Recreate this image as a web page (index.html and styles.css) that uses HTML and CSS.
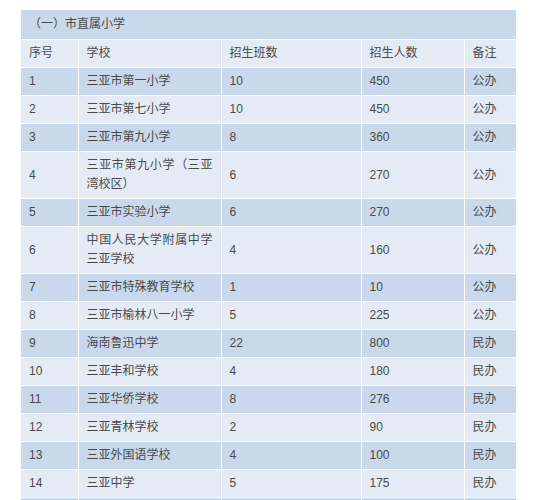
FILE: index.html
```html
<!DOCTYPE html>
<html lang="zh">
<head>
<meta charset="utf-8">
<link rel="stylesheet" href="styles.css">
</head>
<body>
<table class="tbl">
  <colgroup>
    <col class="c1"><col class="c2"><col class="c3"><col class="c4"><col class="c5">
  </colgroup>
  <tr class="dark"><td class="title" colspan="5">（一）市直属小学</td></tr>
  <tr class="light"><td>序号</td><td>学校</td><td>招生班数</td><td>招生人数</td><td>备注</td></tr>
  <tr class="dark"><td>1</td><td>三亚市第一小学</td><td>10</td><td>450</td><td>公办</td></tr>
  <tr class="light"><td>2</td><td>三亚市第七小学</td><td>10</td><td>450</td><td>公办</td></tr>
  <tr class="dark"><td>3</td><td>三亚市第九小学</td><td>8</td><td>360</td><td>公办</td></tr>
  <tr class="light"><td>4</td><td class="just">三亚市第九小学（三亚湾校区）</td><td>6</td><td>270</td><td>公办</td></tr>
  <tr class="dark"><td>5</td><td>三亚市实验小学</td><td>6</td><td>270</td><td>公办</td></tr>
  <tr class="light"><td>6</td><td class="just">中国人民大学附属中学三亚学校</td><td>4</td><td>160</td><td>公办</td></tr>
  <tr class="dark"><td>7</td><td>三亚市特殊教育学校</td><td>1</td><td>10</td><td>公办</td></tr>
  <tr class="light"><td>8</td><td>三亚市榆林八一小学</td><td>5</td><td>225</td><td>公办</td></tr>
  <tr class="dark"><td>9</td><td>海南鲁迅中学</td><td>22</td><td>800</td><td>民办</td></tr>
  <tr class="light"><td>10</td><td>三亚丰和学校</td><td>4</td><td>180</td><td>民办</td></tr>
  <tr class="dark"><td>11</td><td>三亚华侨学校</td><td>8</td><td>276</td><td>民办</td></tr>
  <tr class="light"><td>12</td><td>三亚青林学校</td><td>2</td><td>90</td><td>民办</td></tr>
  <tr class="dark"><td>13</td><td>三亚外国语学校</td><td>4</td><td>100</td><td>民办</td></tr>
  <tr class="light"><td>14</td><td>三亚中学</td><td>5</td><td>175</td><td>民办</td></tr>
  <tr class="dark"><td>&nbsp;</td><td>&nbsp;</td><td>&nbsp;</td><td>&nbsp;</td><td>&nbsp;</td></tr>
</table>
</body>
</html>
```
FILE: styles.css
```css
html, body {
  margin: 0;
  padding: 0;
  background: #ffffff;
  overflow: hidden;
}
body {
  padding: 10px 0 0 21px;
  font-family: "Liberation Sans", "Noto Sans CJK SC", sans-serif;
  font-size: 12px;
  color: #4a4a4a;
}
.tbl {
  width: 495px;
  border-collapse: collapse;
  table-layout: fixed;
}
.c1 { width: 57px; }
.c2 { width: 143px; }
.c3 { width: 140px; }
.c4 { width: 103px; }
.c5 { width: 52px; }
.tbl td {
  border: 1px solid #ffffff;
  padding: 4px 8px;
  line-height: 19px;
  vertical-align: middle;
  text-align: left;
}
.tbl tr:first-child td { border-top: none; }
.tbl td:first-child { border-left: none; }
.tbl td:last-child { border-right: none; }
.tbl td.title {
  padding: 5px 8px;
  border-top: none;
}
.tbl td.just { text-align: justify; }
.dark td { background: #c9d9eb; }
.light td { background: #e4ebf5; }
```
